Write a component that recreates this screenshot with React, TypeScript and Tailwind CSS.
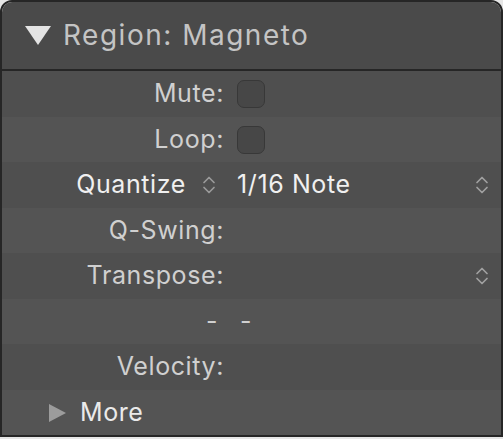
import React from 'react';

function Chevrons({ className = '' }: { className?: string }) {
  return (
    <svg width="14" height="22" viewBox="0 0 14 22" className={className} fill="none">
      <path d="M2 8.5 L7 3.5 L12 8.5" stroke="currentColor" strokeWidth="1.7" strokeLinecap="round" strokeLinejoin="round" />
      <path d="M2 13.5 L7 18.5 L12 13.5" stroke="currentColor" strokeWidth="1.7" strokeLinecap="round" strokeLinejoin="round" />
    </svg>
  );
}

function Checkbox() {
  return <div className="w-[28px] h-[28px] rounded-[7px] bg-[#474747] border border-[#383838]" />;
}

type Row = { label: React.ReactNode; value?: React.ReactNode; right?: boolean };

const rows: Row[] = [
  { label: 'Mute:', value: <Checkbox /> },
  { label: 'Loop:', value: <Checkbox /> },
  {
    label: (
      <span className="flex items-center gap-[16px] pr-[8px] text-[#f0f0f0]">
        Quantize
        <Chevrons className="text-[#9a9a9a]" />
      </span>
    ),
    value: <span className="text-[#f0f0f0]">1/16 Note</span>,
    right: true,
  },
  { label: 'Q-Swing:' },
  { label: 'Transpose:', right: true },
  { label: <span className="pr-[6px]">-</span>, value: <span className="pl-[3px]">-</span> },
  { label: 'Velocity:' },
];

export default function App() {
  return (
    <div className="w-[503px] h-[439px] bg-[#e6e6e6] font-['Inter',sans-serif]">
      <div className="h-[437px] border-2 border-[#262626] rounded-t-[12px] overflow-hidden flex flex-col">
        <div className="h-[69px] shrink-0 bg-[#4a4a4a] border-b-2 border-[#262626] flex items-center pl-[23px] gap-[12px] text-[#c4c4c4]">
          <svg width="26" height="19" viewBox="0 0 26 19">
            <path d="M0 0 H26 L13 19 Z" fill="#e4e4e4" />
          </svg>
          <span className="text-[28px] tracking-[1.5px] pb-[2px]">Region: Magneto</span>
        </div>
        {rows.map((r, i) => (
          <div
            key={i}
            className={`flex items-center shrink-0 text-[25px] tracking-[0.6px] text-[#d0d0d0] ${i % 2 === 0 ? 'h-[46px] bg-[#4f4f4f]' : 'h-[45px] bg-[#545454]'}`}
          >
            <div className="w-[222px] flex justify-end">{r.label}</div>
            <div className="flex-1 flex items-center pl-[13px] pr-[12px]">
              <div className="flex-1">{r.value}</div>
              {r.right && <Chevrons className="text-[#a0a0a0]" />}
            </div>
          </div>
        ))}
        <div className="h-[45px] shrink-0 bg-[#545454] flex items-center pl-[47px] gap-[14px] text-[25px] tracking-[0.6px] text-[#eaeaea]">
          <svg width="17" height="18" viewBox="0 0 17 18">
            <path d="M0 0 L17 9 L0 18 Z" fill="#9c9c9c" />
          </svg>
          <span>More</span>
        </div>
      </div>
    </div>
  );
}
